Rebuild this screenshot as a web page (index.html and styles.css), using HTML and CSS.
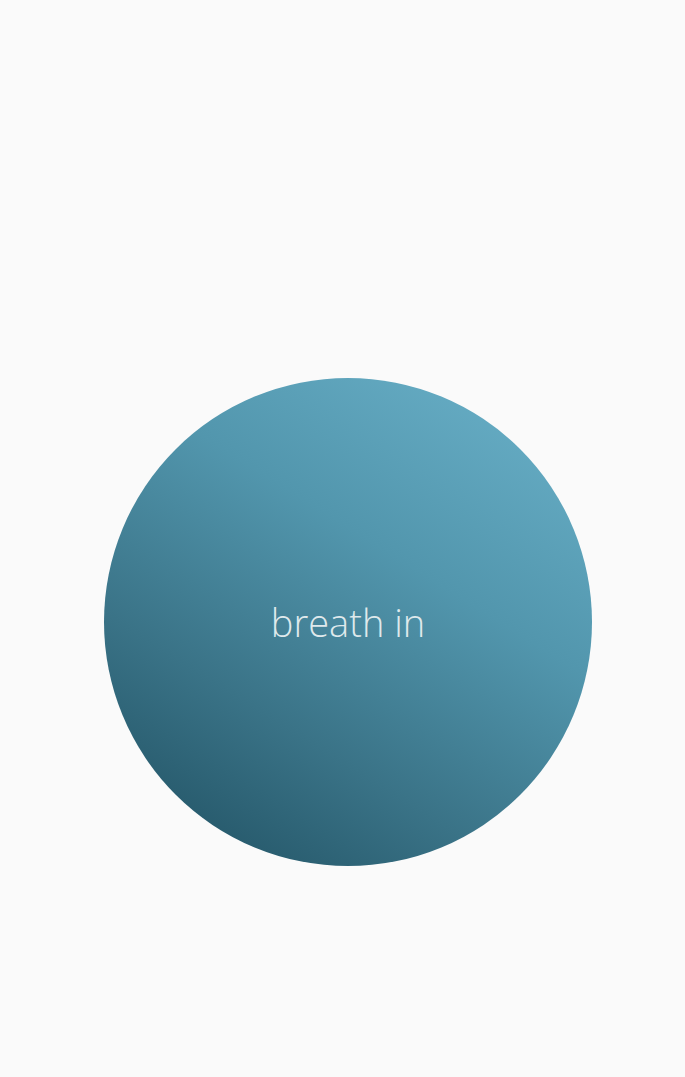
FILE: index.html
```html
<!DOCTYPE html>
<html lang="en">
<head>
<meta charset="utf-8">
<title>Breathe</title>
<link rel="stylesheet" href="styles.css">
</head>
<body>
<main class="stage">
  <div class="bubble">
    <span class="label">breath in</span>
  </div>
</main>
</body>
</html>
```
FILE: styles.css
```css
html, body {
  margin: 0;
  padding: 0;
  background: #fafafa;
  height: 100%;
}
.stage {
  display: flex;
  justify-content: flex-start;
  padding: 378px 0 0 104px;
  box-sizing: border-box;
  min-height: 100%;
}
.bubble {
  width: 488px;
  height: 488px;
  border-radius: 50%;
  background: linear-gradient(212deg, #6cb3cb 0%, #5296ad 38%, #3a7387 68%, #245668 92%, #225266 100%);
  display: flex;
  align-items: center;
  justify-content: center;
}
.label {
  font-family: "Open Sans", "Noto Sans", sans-serif;
  font-weight: 300;
  font-size: 38px;
  color: #dfe9ec;
  line-height: 1;
  letter-spacing: 0;
  position: relative;
  top: 0;
}
```
